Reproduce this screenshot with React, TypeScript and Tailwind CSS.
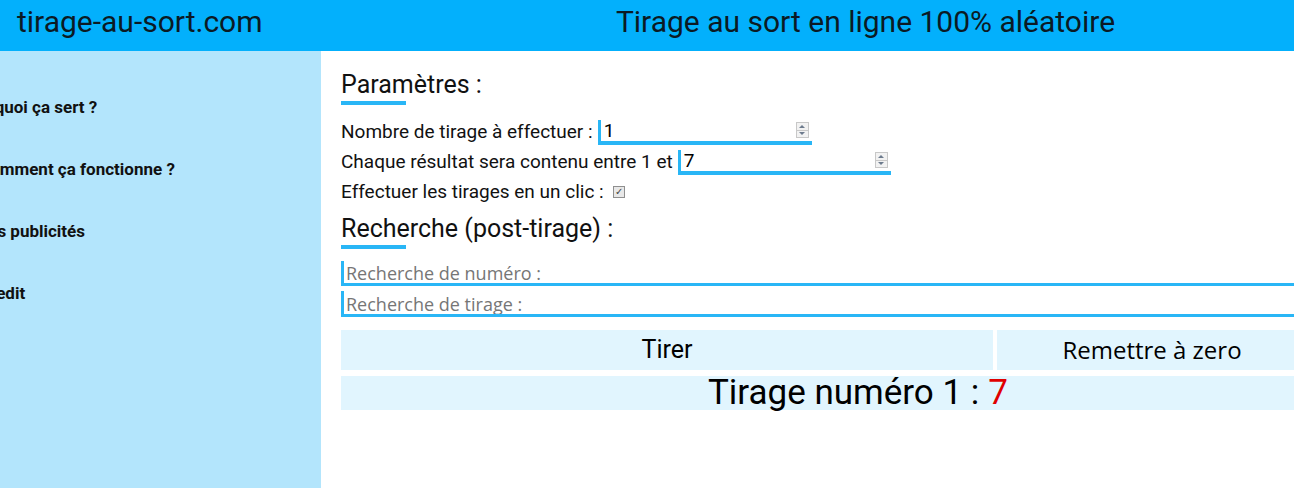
const menu = ['À quoi ça sert ?', 'Comment ça fonctionne ?', 'Les publicités', 'Credit']

function Spinner() {
  return (
    <div className="flex h-[16px] w-[13px] flex-col border border-[#c8c8c8] bg-[#f2f2f2]">
      <div className="flex flex-1 items-center justify-center border-b border-[#c8c8c8]">
        <div className="h-0 w-0 border-x-[3px] border-b-[3px] border-x-transparent border-b-[#6d7b8d]" />
      </div>
      <div className="flex flex-1 items-center justify-center">
        <div className="h-0 w-0 border-x-[3px] border-t-[3px] border-x-transparent border-t-[#6d7b8d]" />
      </div>
    </div>
  )
}

function NumberField({ value, width }: { value: string; width: string }) {
  return (
    <div className={`ml-[5px] flex h-[25px] items-center justify-between border-b-4 border-l-[3px] border-[#29b6f6] pl-[3px] pr-[3px] ${width}`}>
      <span className="text-[19px] leading-none text-black">{value}</span>
      <Spinner />
    </div>
  )
}

function Heading({ children }: { children: React.ReactNode }) {
  return (
    <div className="flex flex-col">
      <h2 className="text-[25px] leading-[28px] text-[#111]">{children}</h2>
      <div className="mt-[2px] h-[4px] w-[65px] bg-[#29b6f6]" />
    </div>
  )
}

export default function App() {
  return (
    <div className="h-[488px] w-full overflow-hidden bg-white font-['Roboto',sans-serif] text-[#111]">
      <div className="w-[1410px]">
        <header className="flex h-[51px] items-center bg-[#03b0fc] pb-[8px] text-[30px] text-[#0b1a24]">
          <div className="w-[321px] pl-[17px]">tirage-au-sort.com</div>
          <div className="flex-1 text-center">Tirage au sort en ligne 100% aléatoire</div>
        </header>
        <div className="flex h-[437px]">
          <nav className="flex w-[321px] flex-col gap-[42px] bg-[#b3e5fc] pt-[46px]">
            {menu.map((item) => (
              <a key={item} className="-ml-[21px] text-[17px] font-bold leading-[20px] text-[#111]">
                {item}
              </a>
            ))}
          </nav>
          <main className="flex-1 pl-[20px] pr-[35px] pt-[20px]">
            <Heading>Paramètres :</Heading>
            <div className="mt-[12px] flex flex-col text-[19px]">
              <div className="flex h-[30px] items-center">
                <span>Nombre de tirage à effectuer :</span>
                <NumberField value="1" width="w-[214px]" />
              </div>
              <div className="flex h-[30px] items-center">
                <span>Chaque résultat sera contenu entre 1 et</span>
                <NumberField value="7" width="w-[213px]" />
              </div>
              <div className="flex h-[30px] items-center">
                <span>Effectuer les tirages en un clic :</span>
                <div className="ml-[9px] flex h-[12px] w-[12px] items-center justify-center border border-[#8f8f8f] bg-[#e8e8e8] text-[10px] leading-none text-[#444]">
                  ✓
                </div>
              </div>
            </div>
            <div className="mt-[8px]">
              <Heading>Recherche (post-tirage) :</Heading>
            </div>
            <div className="mt-[12px] flex flex-col gap-[5px] font-['Open_Sans',sans-serif] text-[18px] text-[#767676]">
              <div className="flex h-[25px] items-end overflow-hidden border-b-[3px] border-l-[3px] border-[#29b6f6] pl-[2px]">
                <span className="leading-[20px]">Recherche de numéro :</span>
              </div>
              <div className="flex h-[26px] items-end overflow-hidden border-b-[3px] border-l-[3px] border-[#29b6f6] pl-[2px]">
                <span className="leading-[20px]">Recherche de tirage :</span>
              </div>
            </div>
            <div className="mt-[13px] flex gap-[4px]">
              <button className="h-[40px] w-[652px] bg-[#e1f5fe] text-[25px] text-black">Tirer</button>
              <button className="h-[40px] w-[310px] bg-[#e1f5fe] font-['Open_Sans',sans-serif] text-[24px] text-black">
                Remettre à zero
              </button>
            </div>
            <div className="mt-[6px] flex h-[34px] items-center justify-center bg-[#e1f5fe] text-[35px] text-black">
              Tirage numéro 1 : <span className="ml-[9px] text-[#e00000]">7</span>
            </div>
          </main>
        </div>
      </div>
    </div>
  )
}
